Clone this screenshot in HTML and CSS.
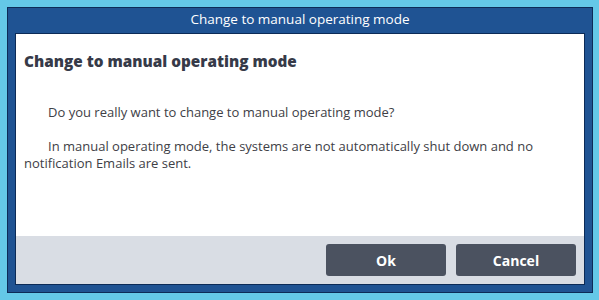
FILE: index.html
```html
<!DOCTYPE html>
<html>
<head>
    <meta charset="UTF-8">
    <title>Change to manual operating mode</title>
    <link rel="stylesheet" href="styles.css">
</head>
<body>
    <div class="dialog">
        <div class="dialog-title">Change to manual operating mode</div>
        <div class="dialog-body">
            <div class="content">
                <div class="heading">Change to manual operating mode</div>
                <p class="message">Do you really want to change to manual operating mode?</p>
                <p class="message">In manual operating mode, the systems are not automatically shut down and no notification Emails are sent.</p>
            </div>
            <div class="footer">
                <button class="dialog-button" id="ok-btn">Ok</button>
                <button class="dialog-button" id="cancel-btn">Cancel</button>
            </div>
        </div>
    </div>
</body>
</html>
```

FILE: styles.css
```css
html, body {
    height: 100%;
}

body {
    margin: 0;
    padding: 7px 6px 7px 7px;
    box-sizing: border-box;
    background-color: #64c8e8;
    font-family: "Open Sans", "Noto Sans", sans-serif;
    user-select: none;
}

.dialog {
    height: 100%;
    box-sizing: border-box;
    border: 1px solid #0c2b57;
    background-color: #1f5393;
    padding: 0 7px 7px 7px;
    display: flex;
    flex-direction: column;
}

.dialog-title {
    height: 25px;
    line-height: 23px;
    text-align: center;
    color: #ffffff;
    font-size: 13.5px;
}

.dialog-body {
    flex: 1;
    border: 1px solid #0c2b57;
    background-color: #ffffff;
    display: flex;
    flex-direction: column;
}

.content {
    flex: 1;
    padding: 17px 8px 0 8px;
    color: #3d3d47;
}

.heading {
    font-size: 15.3px;
    font-weight: 800;
    color: #363a48;
    margin-bottom: 33px;
}

.message {
    margin: 0 0 17px 0;
    font-size: 13px;
    line-height: 17px;
    text-indent: 24px;
    color: #404046;
}

.footer {
    height: 48px;
    background-color: #d9dde4;
    display: flex;
    justify-content: flex-end;
    align-items: center;
    gap: 10px;
    padding: 0 8px 0 0;
}

.dialog-button {
    width: 120px;
    height: 32px;
    border: none;
    border-radius: 3px;
    background-color: #4b5260;
    color: #ffffff;
    font-family: "Open Sans", "Noto Sans", sans-serif;
    font-size: 14px;
    font-weight: bold;
    cursor: pointer;
}

.dialog-button:hover {
    background-color: #5a6272;
}
```
